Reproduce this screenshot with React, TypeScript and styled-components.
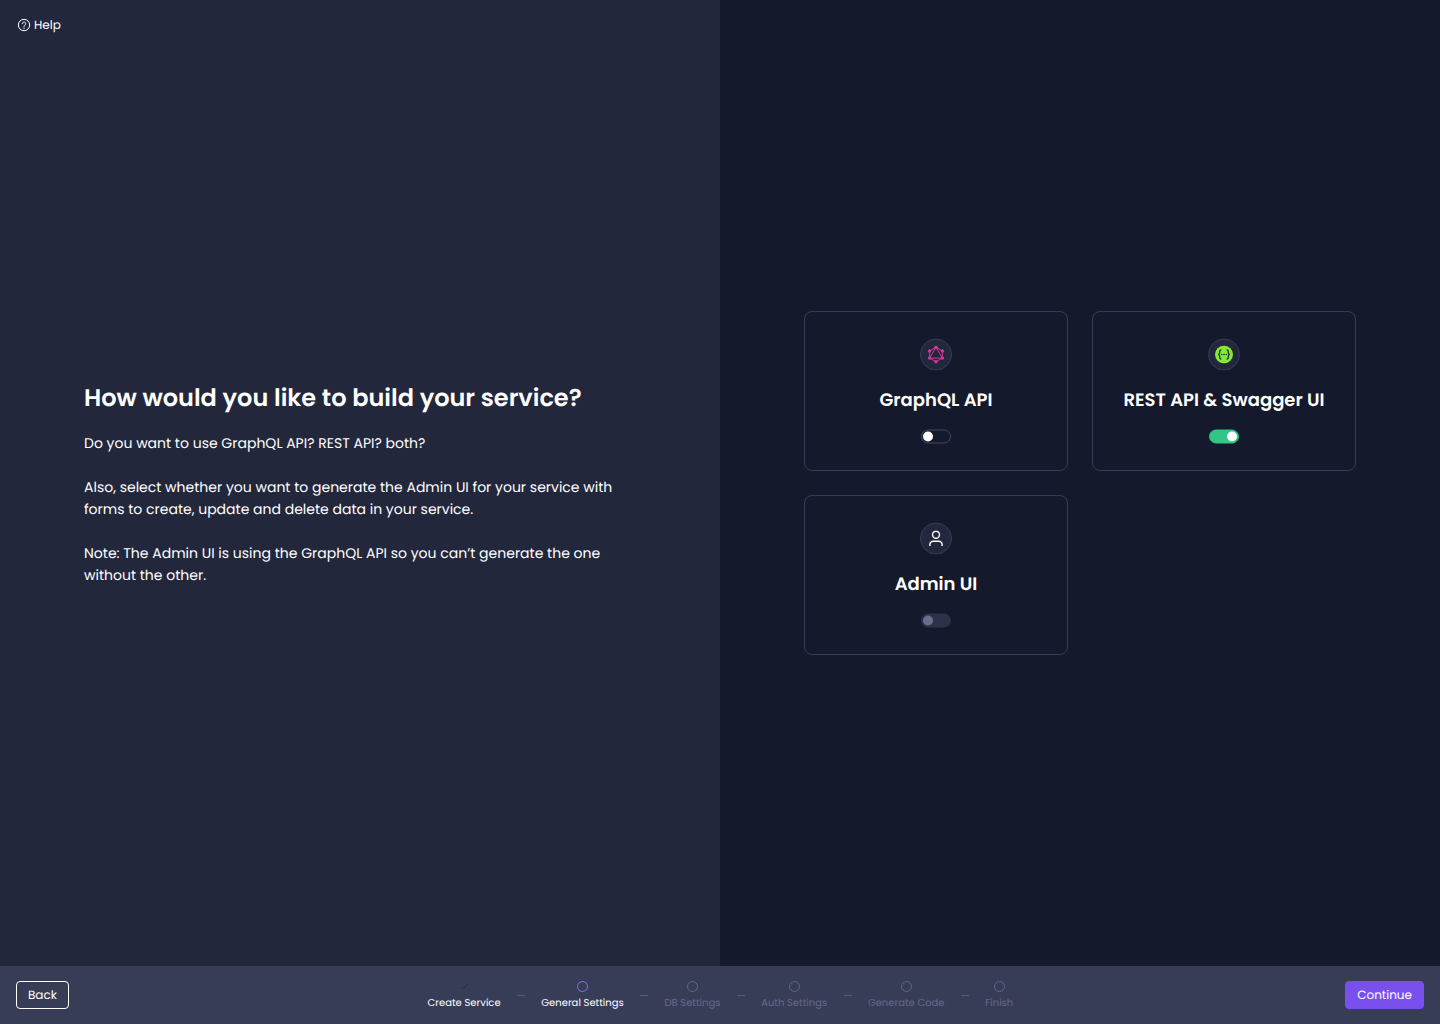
import React, { Fragment, type ReactNode } from "react";
import styled, { createGlobalStyle, css } from "styled-components";

const GlobalStyle = createGlobalStyle`
  *, *::before, *::after { box-sizing: border-box; }
  body {
    margin: 0;
    background: #15192c;
    color: #fff;
    font-family: Poppins, "Open Sans", sans-serif;
    text-rendering: geometricPrecision;
  }
  button { text-rendering: inherit; }
  h1, h2, p { margin: 0; }
  svg { display: block; }
`;

const Page = styled.div`
  display: flex;
  flex-direction: column;
  width: 1440px;
  height: 1024px;
`;

const Panels = styled.main`
  display: grid;
  grid-template-columns: 1fr 1fr;
  height: 966px;
`;

const IntroPanel = styled.section`
  display: grid;
  grid-template-rows: 50px 1fr 50px;
  background: #22273c;
`;

const HelpLink = styled.button`
  display: flex;
  align-items: center;
  justify-self: start;
  gap: 4px;
  padding: 0 0 0 18px;
  border: 0;
  background: none;
  color: #fff;
  font: 400 12px/18px Poppins, sans-serif;

  svg { overflow: visible; }
`;

const HelpLabel = styled.span`
  padding-top: 2px;
`;

const Intro = styled.div`
  display: flex;
  flex-direction: column;
  justify-content: center;
  gap: 14px;
  padding: 0 84px;
`;

const Title = styled.h1`
  font-size: 24px;
  line-height: 38px;
  font-weight: 600;
`;

const Copy = styled.div`
  display: flex;
  flex-direction: column;
  gap: 22px;
  font-size: 14px;
  line-height: 22px;
`;

const OptionsPanel = styled.section`
  display: grid;
  grid-template-columns: 264px 264px;
  grid-auto-rows: 160px;
  gap: 24px;
  align-content: center;
  justify-content: center;
  background: #15192c;
`;

const Card = styled.article`
  display: flex;
  flex-direction: column;
  align-items: center;
  justify-content: center;
  gap: 16px;
  border: 1px solid #373d57;
  border-radius: 8px;
`;

const IconBadge = styled.span`
  display: grid;
  place-items: center;
  width: 32px;
  height: 32px;
  border: 1px solid #373d57;
  border-radius: 50%;
  background: #22273c;
  transform: translateY(0.5px);
`;

const CardTitle = styled.h2`
  padding-top: 2px;
  font-size: 18px;
  line-height: 26px;
  font-weight: 600;
`;

type SwitchState = "off" | "on" | "disabled";

const switchColors: Record<SwitchState, { track: string; edge: string; knob: string }> = {
  off: { track: "#15192c", edge: "#40466a", knob: "#ffffff" },
  on: { track: "#31c587", edge: "#31c587", knob: "#ffffff" },
  disabled: { track: "#2c3249", edge: "#2c3249", knob: "#686f8c" },
};

const Track = styled.button<{ $state: SwitchState }>`
  display: flex;
  align-items: center;
  width: 30px;
  height: 14px;
  padding: 0 1px;
  border: 1px solid;
  border-radius: 7px;
  transform: translateY(-0.5px);
  ${({ $state }) => css`
    justify-content: ${$state === "on" ? "flex-end" : "flex-start"};
    border-color: ${switchColors[$state].edge};
    background: ${switchColors[$state].track};
  `}
`;

const Knob = styled.span<{ $state: SwitchState }>`
  width: 10px;
  height: 10px;
  border-radius: 50%;
  background: ${({ $state }) => switchColors[$state].knob};
`;

const Footer = styled.footer`
  display: grid;
  grid-template-columns: 1fr auto 1fr;
  align-items: center;
  height: 58px;
  padding: 0 16px;
  background: #383d57;
`;

const Button = styled.button<{ $primary?: boolean }>`
  justify-self: ${({ $primary }) => ($primary ? "end" : "start")};
  height: 28px;
  padding: 2px 11px 0;
  border: 1px solid ${({ $primary }) => ($primary ? "#7950ed" : "#fff")};
  border-radius: 4px;
  background: ${({ $primary }) => ($primary ? "#7950ed" : "transparent")};
  color: #fff;
  font: 400 12px/18px Poppins, sans-serif;
`;

const Steps = styled.nav`
  display: flex;
  align-items: center;
  gap: 16px;
  padding-left: 0.8px;
`;

type StepState = "done" | "current" | "next";

const Step = styled.span<{ $state: StepState }>`
  display: flex;
  flex-direction: column;
  align-items: center;
  gap: 2px;
  padding: 0 0.35px;
  color: ${({ $state }) => ($state === "next" ? "#636a8a" : "#fff")};
  font-size: 10px;
  line-height: 15px;
`;

const StepLabel = styled.span`
  transform: translateY(0.5px);
`;

const Marker = styled.span<{ $state: StepState }>`
  display: grid;
  place-items: center;
  width: 11px;
  height: 11px;
  border-radius: 50%;
  border: ${({ $state }) =>
    $state === "done" ? "0" : `1px solid ${$state === "current" ? "#9069f8" : "#5f6789"}`};
`;

const Dash = styled.span`
  width: 8px;
  height: 1px;
  background: #535b7c;
`;

const HelpIcon = () => (
  <svg width="12" height="12" viewBox="0 0 12 12" fill="none" stroke="#fff">
    <circle cx="6" cy="6" r="5.7" />
    <path d="M4.3 4.7a1.7 1.7 0 1 1 2.6 1.4c-.6.35-.9.6-.9 1.2" strokeLinecap="round" />
    <circle cx="6" cy="9" r=".65" fill="#fff" stroke="none" />
  </svg>
);

const GraphqlIcon = () => (
  <svg width="18" height="18" viewBox="0 0 18 18" fill="none" stroke="#d7359f">
    <path d="M9 1.8 15.4 5.4v7.2L9 16.2 2.6 12.6V5.4zM9 1.8 2.6 12.6h12.8z" strokeWidth="1" />
    <g fill="#d7359f" stroke="none">
      <circle cx="9" cy="1.8" r="1.7" />
      <circle cx="15.4" cy="5.4" r="1.7" />
      <circle cx="15.4" cy="12.6" r="1.7" />
      <circle cx="9" cy="16.2" r="1.7" />
      <circle cx="2.6" cy="12.6" r="1.7" />
      <circle cx="2.6" cy="5.4" r="1.7" />
    </g>
  </svg>
);

const SwaggerIcon = () => (
  <svg width="18" height="18" viewBox="0 0 18 18" fill="none" stroke="#22273c">
    <circle cx="9" cy="9" r="9" fill="#85ea2d" stroke="none" />
    <path
      d="M6.4 4.3c-1.4 0-1.7.5-1.7 1.8 0 1.7.1 2.6-1.3 2.9 1.4.3 1.3 1.2 1.3 2.9 0 1.3.3 1.8 1.7 1.8M11.6 4.3c1.4 0 1.7.5 1.7 1.8 0 1.7-.1 2.6 1.3 2.9-1.4.3-1.3 1.2-1.3 2.9 0 1.3-.3 1.8-1.7 1.8"
      strokeWidth="1.3"
    />
    <g fill="#22273c" stroke="none">
      <circle cx="6.7" cy="9" r=".8" />
      <circle cx="9" cy="9" r=".8" />
      <circle cx="11.3" cy="9" r=".8" />
    </g>
  </svg>
);

const UserIcon = () => (
  <svg width="14" height="16" viewBox="0 0 14 16" fill="none" stroke="#fff" strokeWidth="1.4">
    <circle cx="7" cy="4.3" r="3.5" />
    <path d="M.9 15.4v-1.3A3.2 3.2 0 0 1 4.1 10.8h5.8a3.2 3.2 0 0 1 3.2 3.3v1.3" />
  </svg>
);

const CheckIcon = () => (
  <svg width="9" height="7" viewBox="0 0 9 7" fill="none" stroke="#2f344b" strokeWidth="1.2">
    <path d="m1 3.8 2 2L8 1" />
  </svg>
);

const options: { name: string; icon: ReactNode; state: SwitchState }[] = [
  { name: "GraphQL API", icon: <GraphqlIcon />, state: "off" },
  { name: "REST API & Swagger UI", icon: <SwaggerIcon />, state: "on" },
  { name: "Admin UI", icon: <UserIcon />, state: "disabled" },
];

const steps: { name: string; state: StepState }[] = [
  { name: "Create Service", state: "done" },
  { name: "General Settings", state: "current" },
  { name: "DB Settings", state: "next" },
  { name: "Auth Settings", state: "next" },
  { name: "Generate Code", state: "next" },
  { name: "Finish", state: "next" },
];

export default function App() {
  return (
    <Page>
      <GlobalStyle />
      <Panels>
        <IntroPanel>
          <HelpLink>
            <HelpIcon />
            <HelpLabel>Help</HelpLabel>
          </HelpLink>
          <Intro>
            <Title>How would you like to build your service?</Title>
            <Copy>
              <p>Do you want to use GraphQL API? REST API? both?</p>
              <p>
                Also, select whether you want to generate the Admin UI for your service with
                <br />
                forms to create, update and delete data in your service.
              </p>
              <p>
                Note: The Admin UI is using the GraphQL API so you can’t generate the one
                <br />
                without the other.
              </p>
            </Copy>
          </Intro>
        </IntroPanel>
        <OptionsPanel>
          {options.map(({ name, icon, state }) => (
            <Card key={name}>
              <IconBadge>{icon}</IconBadge>
              <CardTitle>{name}</CardTitle>
              <Track $state={state} disabled={state === "disabled"}>
                <Knob $state={state} />
              </Track>
            </Card>
          ))}
        </OptionsPanel>
      </Panels>
      <Footer>
        <Button>Back</Button>
        <Steps>
          {steps.map(({ name, state }, index) => (
            <Fragment key={name}>
              {index > 0 && <Dash />}
              <Step $state={state}>
                <Marker $state={state}>{state === "done" && <CheckIcon />}</Marker>
                <StepLabel>{name}</StepLabel>
              </Step>
            </Fragment>
          ))}
        </Steps>
        <Button $primary>Continue</Button>
      </Footer>
    </Page>
  );
}
